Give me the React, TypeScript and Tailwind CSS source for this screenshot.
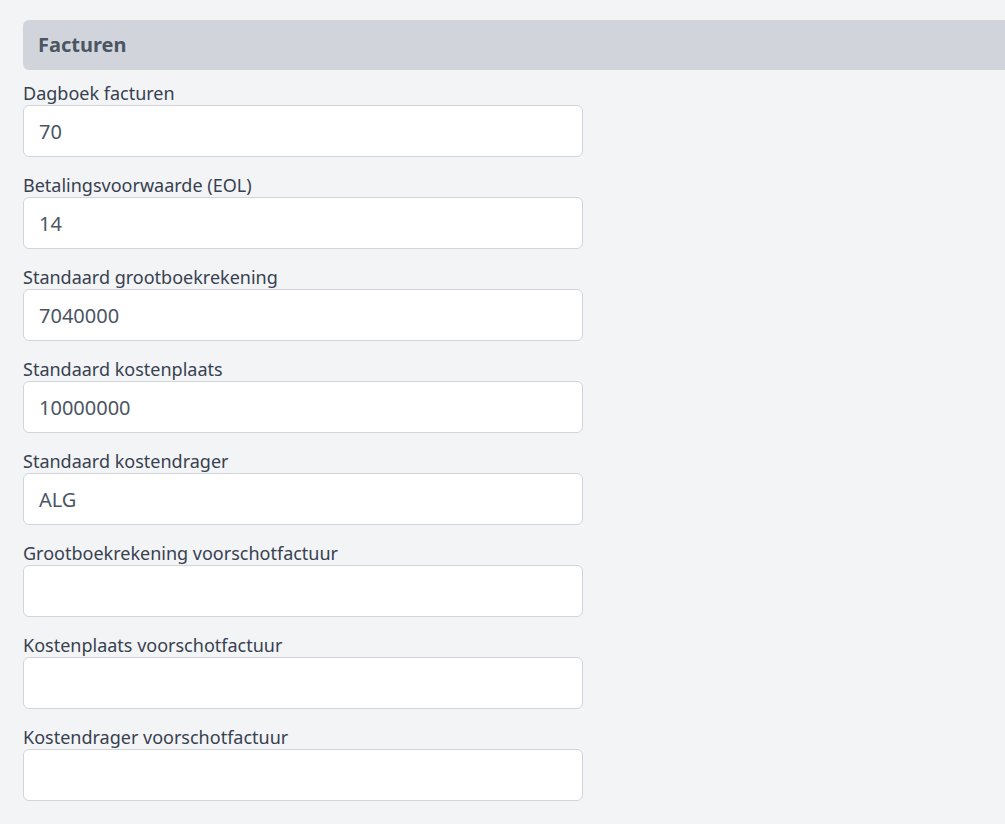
const fields: { label: string; value: string }[] = [
  { label: 'Dagboek facturen', value: '70' },
  { label: 'Betalingsvoorwaarde (EOL)', value: '14' },
  { label: 'Standaard grootboekrekening', value: '7040000' },
  { label: 'Standaard kostenplaats', value: '10000000' },
  { label: 'Standaard kostendrager', value: 'ALG' },
  { label: 'Grootboekrekening voorschotfactuur', value: '' },
  { label: 'Kostenplaats voorschotfactuur', value: '' },
  { label: 'Kostendrager voorschotfactuur', value: '' },
];

export default function App() {
  return (
    <div className="min-h-screen bg-[#f3f4f6] pt-[20px] pl-[23px] font-['Noto_Sans',sans-serif]">
      <div className="h-[50px] flex items-center rounded-l-md bg-[#d1d5db] px-[15px]">
        <h2 className="text-[20px] font-bold text-[#4b5563]">Facturen</h2>
      </div>
      <div className="mt-[11px] flex flex-col gap-4">
        {fields.map((f) => (
          <div key={f.label} className="flex flex-col">
            <label className="h-6 text-[18px] leading-6 text-[#374151]">{f.label}</label>
            <input
              readOnly
              value={f.value}
              className="h-[52px] w-[560px] rounded-md border border-[#d1d5db] bg-white px-[15px] text-[20px] text-[#4b5563] outline-none"
            />
          </div>
        ))}
      </div>
    </div>
  );
}
